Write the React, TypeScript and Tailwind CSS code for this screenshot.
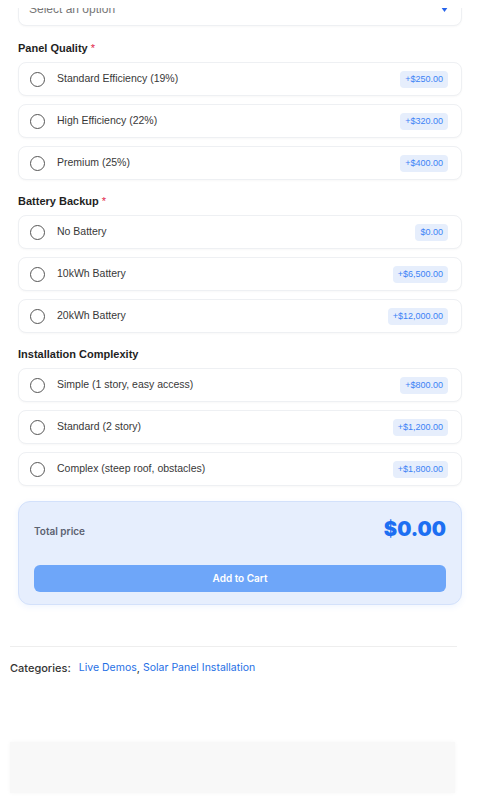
import React from "react";

type Option = { label: string; price: string };

const GROUPS: { title: string; required: boolean; options: Option[] }[] = [
  {
    title: "Panel Quality",
    required: true,
    options: [
      { label: "Standard Efficiency (19%)", price: "+$250.00" },
      { label: "High Efficiency (22%)", price: "+$320.00" },
      { label: "Premium (25%)", price: "+$400.00" },
    ],
  },
  {
    title: "Battery Backup",
    required: true,
    options: [
      { label: "No Battery", price: "$0.00" },
      { label: "10kWh Battery", price: "+$6,500.00" },
      { label: "20kWh Battery", price: "+$12,000.00" },
    ],
  },
  {
    title: "Installation Complexity",
    required: false,
    options: [
      { label: "Simple (1 story, easy access)", price: "+$800.00" },
      { label: "Standard (2 story)", price: "+$1,200.00" },
      { label: "Complex (steep roof, obstacles)", price: "+$1,800.00" },
    ],
  },
];

function OptionRow({ label, price }: Option) {
  return (
    <label className="flex h-[34px] items-center rounded-lg border border-[#eef0f3] bg-white pl-[11px] pr-[13px] shadow-[0_1px_2px_rgba(0,0,0,0.03)]">
      <span className="h-[15px] w-[15px] shrink-0 rounded-full border-[1.5px] border-[#555]" />
      <span className="ml-[12px] flex-1 text-[10.5px] text-[#383838]">{label}</span>
      <span className="rounded-[4px] bg-[#e6eefc] px-[5px] py-[3px] text-[9px] leading-[11px] text-[#3b82f6]">
        {price}
      </span>
    </label>
  );
}

export default function App() {
  return (
    <div className="relative min-h-[805px] overflow-hidden bg-white font-['Liberation_Sans',Arial,sans-serif]">
      {/* white strip of the sticky header that covers the top of the select */}
      <div className="absolute inset-x-0 top-0 z-10 h-[8px] bg-white" />

      <div className="px-[18px]">
        <div className="-mt-[8px] flex h-[34px] items-center justify-between rounded-lg border border-[#eef0f3] bg-white pl-[10px] pr-[13px] shadow-[0_1px_2px_rgba(0,0,0,0.03)]">
          <span className="text-[12px] text-[#777]">Select an option</span>
          <svg width="7" height="5" viewBox="0 0 7 5">
            <path d="M0 0h7L3.5 5z" fill="#2563eb" />
          </svg>
        </div>

        {GROUPS.map((g, i) => (
          <div key={g.title}>
            <div
              className={
                (i === 0 ? "mt-[15px]" : "mt-[14px]") +
                " mb-[7px] text-[11px] font-bold leading-[14px] text-[#1f1f1f]"
              }
            >
              {g.title}
              {g.required && <span className="ml-[3px] font-normal text-[#e11d48]">*</span>}
            </div>
            <div className="flex flex-col gap-[8px]">
              {g.options.map(o => (
                <OptionRow key={o.label} {...o} />
              ))}
            </div>
          </div>
        ))}

        <div className="mt-[15px] rounded-xl border border-[#d3e1fb] bg-[#e6eefd] px-[15px] pt-[14px] pb-[12px] shadow-[0_2px_6px_rgba(59,130,246,0.08)]">
          <div className="flex items-center justify-between">
            <span className="mt-[5px] font-['Inter',sans-serif] text-[10px] font-semibold text-[#5b6270]">
              Total price
            </span>
            <span className="font-['Inter',sans-serif] text-[20px] font-black leading-[26px] text-[#1d6ff2]">
              $0.00
            </span>
          </div>
          <button className="mt-[23px] h-[27px] w-full rounded-md bg-[#6ea6f9] font-['Inter',sans-serif] text-[10px] font-semibold text-white">
            Add to Cart
          </button>
        </div>
      </div>

      <div className="px-[10px]">
        <div className="mt-[41px] mr-[13px] border-t border-[#eeeeee]" />
        <div className="mt-[13px] flex items-center font-['Inter',sans-serif] text-[11px]">
          <span className="font-medium text-[#333]">Categories:</span>
          <span className="ml-[8px] text-[10.5px] text-[#1f6fe5]">Live Demos</span>
          <span className="text-[#333]">,&nbsp;</span>
          <span className="text-[10.5px] text-[#1f6fe5]">Solar Panel Installation</span>
        </div>
        <div className="mt-[65px] mr-[15px] h-[51px] bg-[#f8f8f8] shadow-[0_0_4px_rgba(0,0,0,0.04)]" />
      </div>
    </div>
  );
}
